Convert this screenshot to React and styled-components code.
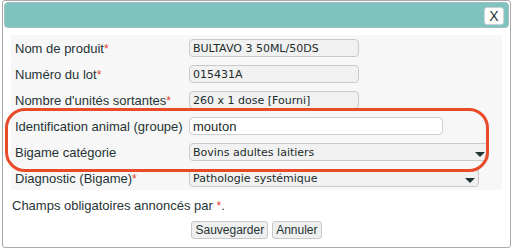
import React from "react";
import styled, { createGlobalStyle } from "styled-components";

const GlobalStyle = createGlobalStyle`
	html, body {
		margin: 0;
		padding: 0;
		background: #ffffff;
	}
	body {
		font-family: "Liberation Sans", Arial, sans-serif;
		color: #1f3434;
	}
`;

const textColor = "#1f3434";
const starColor = "#e0462c";

const Dialog = styled.div`
	position: relative;
	box-sizing: border-box;
	margin-left: 2px;
	width: 509px;
	height: 248px;
	padding: 1px 1px 0 1px;
	border: 1px solid #a9a9a9;
	border-radius: 3px;
	background: #ffffff;
	display: flex;
	flex-direction: column;
`;

const TitleBar = styled.div`
	box-sizing: border-box;
	height: 26px;
	border: 1px solid #9fbfbd;
	border-radius: 4px;
	background: #7fc2bf;
	display: flex;
	justify-content: flex-end;
	align-items: center;
	padding-right: 4px;
`;

const CloseButton = styled.button`
	box-sizing: border-box;
	width: 20px;
	height: 18px;
	margin-top: 1px;
	padding: 0;
	border: 1px solid #c8d4d3;
	border-radius: 3px;
	background: #ffffff;
	color: ${textColor};
	font-family: "Liberation Sans", Arial, sans-serif;
	font-size: 14px;
	line-height: 16px;
	cursor: pointer;
`;

const Body = styled.div`
	padding: 7px 7px 0 7px;
	display: flex;
	flex-direction: column;
`;

const Panel = styled.div`
	background: #f7f7f7;
	padding: 4px 4px 3px 4px;
	display: grid;
	grid-template-columns: 174px 1fr;
	grid-auto-rows: 18px;
	row-gap: 8px;
	align-items: center;
`;

const Label = styled.div`
	font-size: 13px;
	color: ${textColor};
	white-space: nowrap;
`;

const Star = styled.span`
	color: ${starColor};
	font-size: ${props => (props.small ? "12px" : "inherit")};
`;

const Field = styled.div`
	box-sizing: border-box;
	position: relative;
	height: 18px;
	width: ${props => props.width}px;
	padding: 0 3px;
	border: 1px solid ${props => (props.editable ? "#cfcfcf" : "#c9c9c9")};
	border-radius: 4px;
	background: ${props => (props.editable ? "#ffffff" : "#f1f1f1")};
	font-family: ${props =>
		props.editable ? '"Liberation Sans", Arial, sans-serif' : '"DejaVu Sans", Verdana, sans-serif'};
	font-size: ${props => (props.editable ? "13px" : "11px")};
	line-height: 17px;
	color: #1c2c2c;
	white-space: nowrap;
	overflow: hidden;
`;

const Arrow = styled.span`
	position: absolute;
	right: 3px;
	bottom: 3px;
	width: 0;
	height: 0;
	border-left: 5px solid transparent;
	border-right: 5px solid transparent;
	border-top: 5px solid #1f3434;
`;

const Highlight = styled.div`
	position: absolute;
	left: 2px;
	top: 107px;
	width: 484px;
	height: 64px;
	box-sizing: border-box;
	border: 3px solid #e84a2a;
	border-radius: 20px;
	pointer-events: none;
`;

const Note = styled.div`
	margin-top: 8px;
	padding-left: 1px;
	font-size: 13px;
	line-height: 16px;
	color: ${textColor};
`;

const Actions = styled.div`
	display: flex;
	justify-content: center;
	gap: 4px;
	margin-top: 7px;
`;

const ActionButton = styled.button`
	box-sizing: border-box;
	height: 18px;
	padding: 0 3px;
	border: 1px solid #c9c9c9;
	border-radius: 3px;
	background: #efefef;
	color: ${textColor};
	font-family: "Liberation Sans", Arial, sans-serif;
	font-size: 12px;
	line-height: 16px;
	cursor: pointer;
`;

const rows = [
	{ label: "Nom de produit", required: true, value: "BULTAVO 3 50ML/50DS", width: 170 },
	{ label: "Numéro du lot", required: true, value: "015431A", width: 170 },
	{ label: "Nombre d'unités sortantes", required: true, value: "260 x 1 dose [Fourni]", width: 170 },
	{ label: "Identification animal (groupe)", value: "mouton", width: 254, editable: true },
	{ label: "Bigame catégorie", value: "Bovins adultes laitiers", width: 300, select: true },
	{ label: "Diagnostic (Bigame)", required: true, value: "Pathologie systémique", width: 290, select: true }
];

export default function App() {
	return (
		<>
			<GlobalStyle />
			<Dialog>
				<TitleBar>
					<CloseButton>X</CloseButton>
				</TitleBar>
				<Body>
					<Panel>
						{rows.map(row => (
							<React.Fragment key={row.label}>
								<Label>
									{row.label}
									{row.required && <Star small>*</Star>}
								</Label>
								<Field width={row.width} editable={row.editable}>
									{row.value}
									{row.select && <Arrow />}
								</Field>
							</React.Fragment>
						))}
					</Panel>
					<Note>
						Champs obligatoires annoncés par <Star small>*</Star>.
					</Note>
					<Actions>
						<ActionButton>Sauvegarder</ActionButton>
						<ActionButton>Annuler</ActionButton>
					</Actions>
				</Body>
				<Highlight />
			</Dialog>
		</>
	);
}
